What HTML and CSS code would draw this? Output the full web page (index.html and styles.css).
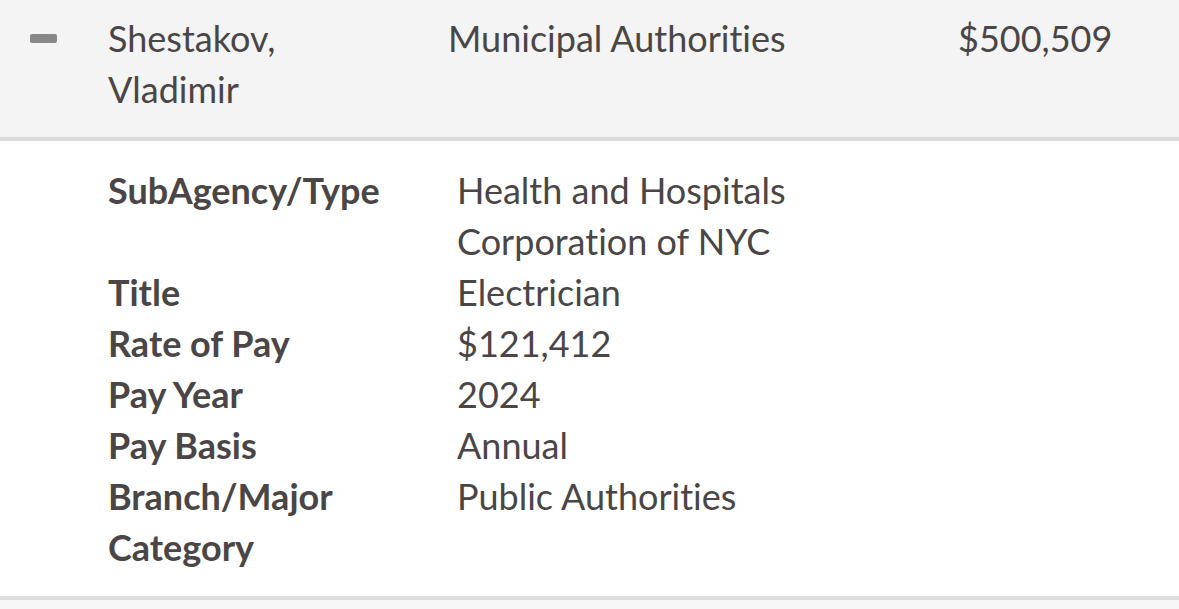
FILE: index.html
```html
<!DOCTYPE html>
<html>
<head>
<meta charset="utf-8">
<link rel="stylesheet" href="styles.css">
</head>
<body>
<div class="row">
  <div class="toggle"><span class="minus"></span></div>
  <div class="name">Shestakov,<br>Vladimir</div>
  <div class="agency">Municipal Authorities</div>
  <div class="amount">$500,509</div>
</div>
<div class="details">
  <div class="label">SubAgency/Type</div><div class="value">Health and Hospitals<br>Corporation of NYC</div>
  <div class="label">Title</div><div class="value">Electrician</div>
  <div class="label">Rate of Pay</div><div class="value">$121,412</div>
  <div class="label">Pay Year</div><div class="value">2024</div>
  <div class="label">Pay Basis</div><div class="value">Annual</div>
  <div class="label">Branch/Major<br>Category</div><div class="value">Public Authorities</div>
</div>
<div class="next"></div>
</body>
</html>
```
FILE: styles.css
```css
html, body {
  margin: 0;
  padding: 0;
  background: #ffffff;
}
body {
  font-family: Lato, "Liberation Sans", sans-serif;
  color: #4a4646;
  font-size: 36px;
  line-height: 51px;
  font-variant-ligatures: none;
}
.row {
  display: flex;
  background: #f4f4f4;
  border-bottom: 4px solid #dcdcdc;
  padding: 13px 0 22px 0;
  height: 102px;
}
.toggle {
  width: 108px;
  position: relative;
}
.minus {
  position: absolute;
  left: 30px;
  top: 21px;
  width: 27px;
  height: 9px;
  border-radius: 2px;
  background: #888888;
}
.name {
  width: 340px;
}
.agency {
  width: 510px;
}
.details {
  display: grid;
  grid-template-columns: 349px auto;
  padding: 24px 0 23px 108px;
  border-bottom: 4px solid #dcdcdc;
}
.label {
  font-weight: 700;
}
.next {
  background: #f7f7f7;
  height: 20px;
}
```
